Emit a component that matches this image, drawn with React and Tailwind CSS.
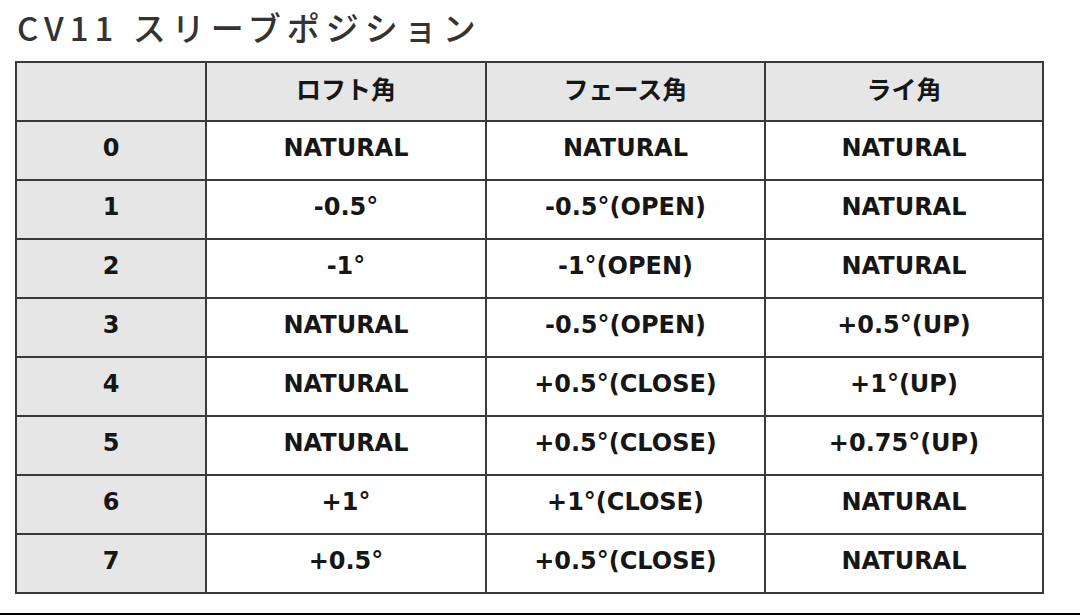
import React from 'react';

const rows = [
  ['0', 'NATURAL', 'NATURAL', 'NATURAL'],
  ['1', '-0.5°', '-0.5°(OPEN)', 'NATURAL'],
  ['2', '-1°', '-1°(OPEN)', 'NATURAL'],
  ['3', 'NATURAL', '-0.5°(OPEN)', '+0.5°(UP)'],
  ['4', 'NATURAL', '+0.5°(CLOSE)', '+1°(UP)'],
  ['5', 'NATURAL', '+0.5°(CLOSE)', '+0.75°(UP)'],
  ['6', '+1°', '+1°(CLOSE)', 'NATURAL'],
  ['7', '+0.5°', '+0.5°(CLOSE)', 'NATURAL'],
];

const cell = 'border-2 border-[#3a3a3a] h-[59px] p-0 pb-[5px] text-center align-middle';

export default function App() {
  return (
    <div className="w-[1080px] h-[615px] bg-white flex flex-col overflow-hidden">
      <div className="h-[61px] pl-[17px] pt-[6px]">
        <h1
          className="text-[33px] leading-[42px] font-medium tracking-[6px] text-[#333333]"
          style={{ fontFamily: '"Noto Sans CJK JP", sans-serif' }}
        >
          CV11 スリーブポジション
        </h1>
      </div>

      <div className="pl-[15px]">
        <table
          className="border-collapse table-fixed text-[#161616] font-bold"
          style={{ fontFamily: '"DejaVu Sans", "Noto Sans CJK JP", sans-serif' }}
        >
          <colgroup>
            <col className="w-[190px]" />
            <col className="w-[280px]" />
            <col className="w-[279px]" />
            <col className="w-[278px]" />
          </colgroup>
          <thead>
            <tr className="bg-[#e6e6e6]">
              <th className={cell}></th>
              {['ロフト角', 'フェース角', 'ライ角'].map(h => (
                <th
                  key={h}
                  className={`${cell} text-[25px] font-bold`}
                  style={{ fontFamily: '"Noto Sans CJK JP", sans-serif' }}
                >
                  {h}
                </th>
              ))}
            </tr>
          </thead>
          <tbody>
            {rows.map(r => (
              <tr key={r[0]} className="text-[24px]">
                <td className={`${cell} bg-[#e6e6e6]`}>{r[0]}</td>
                <td className={`${cell} bg-white`}>{r[1]}</td>
                <td className={`${cell} bg-white`}>{r[2]}</td>
                <td className={`${cell} bg-white`}>{r[3]}</td>
              </tr>
            ))}
          </tbody>
        </table>
      </div>

      <div className="flex-1" />
      <div className="h-[2px] bg-black" />
    </div>
  );
}
